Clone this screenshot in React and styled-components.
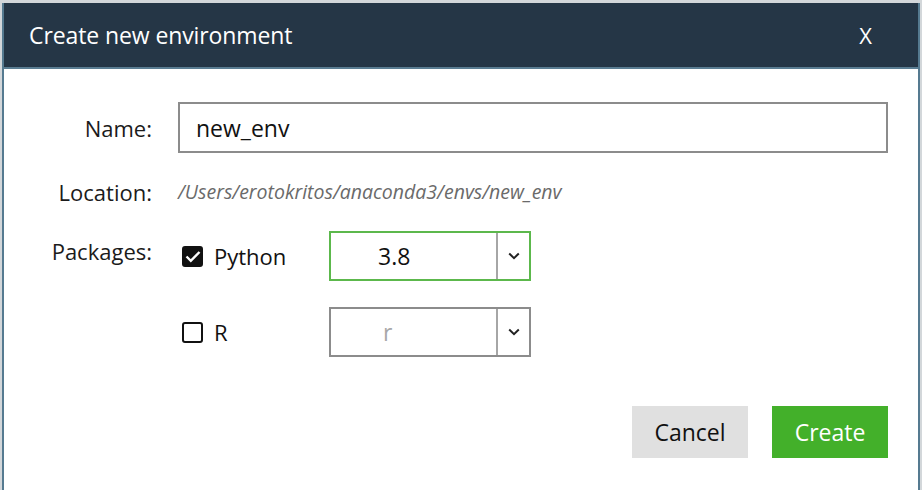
import React, { useState } from "react";
import styled, { createGlobalStyle } from "styled-components";

const GlobalStyle = createGlobalStyle`
  html, body {
    margin: 0;
    padding: 0;
    background: #d3d7da;
    font-family: "Open Sans", "Noto Sans", sans-serif;
  }
`;

const Page = styled.div`
  width: 922px;
  height: 490px;
  padding-top: 3px;
  box-sizing: border-box;
  overflow: hidden;
`;

const Dialog = styled.div`
  margin-left: 2px;
  width: 918px;
  height: 487px;
  box-sizing: border-box;
  background: #fff;
  border-left: 2px solid #557a90;
  border-right: 2px solid #557a90;
  display: flex;
  flex-direction: column;
`;

const Header = styled.div`
  height: 64px;
  background: #253646;
  border-bottom: 2px solid #5a7d92;
  display: flex;
  align-items: center;
  justify-content: space-between;
  padding: 0 46px 0 25px;
  color: #fff;
`;

const Title = styled.div`
  font-size: 23px;
  letter-spacing: -0.1px;
`;

const Close = styled.button`
  background: none;
  border: none;
  color: #fff;
  font-family: inherit;
  font-size: 22px;
  padding: 0;
  cursor: pointer;
`;

const Body = styled.div`
  padding: 33px 30px 0 0;
  display: grid;
  grid-template-columns: 148px 1fr;
  column-gap: 26px;
  row-gap: 27px;
  align-items: center;
`;

const Label = styled.div`
  text-align: right;
  font-size: 22px;
  color: #1b1b1b;
  align-self: ${(p) => (p.$top ? "start" : "center")};
  padding-top: ${(p) => (p.$top ? "8px" : "0")};
  line-height: 24px;
`;

const TextInput = styled.input`
  height: 51px;
  box-sizing: border-box;
  border: 2px solid #8c8c8c;
  padding: 0 16px;
  font-family: inherit;
  font-size: 23px;
  color: #111;
  outline: none;
`;

const Path = styled.div`
  font-size: 19.5px;
  font-style: italic;
  color: #6a6a6a;
  line-height: 24px;
  white-space: nowrap;
`;

const Packages = styled.div`
  display: flex;
  flex-direction: column;
  gap: 26px;
`;

const PackageRow = styled.div`
  display: flex;
  align-items: center;
`;

const CheckLabel = styled.label`
  width: 151px;
  display: flex;
  align-items: center;
  gap: 11px;
  padding-left: 4px;
  box-sizing: border-box;
  font-size: 22px;
  color: #111;
  cursor: pointer;
`;

const Box = styled.span`
  width: 21px;
  height: 21px;
  box-sizing: border-box;
  border-radius: 3px;
  border: 2px solid #111;
  background: ${(p) => (p.$checked ? "#111" : "#fff")};
  display: flex;
  align-items: center;
  justify-content: center;
`;

const Select = styled.div`
  width: 202px;
  height: 50px;
  box-sizing: border-box;
  border: 2px solid ${(p) => (p.$active ? "#5cb84c" : "#8c8c8c")};
  display: flex;
`;

const SelectValue = styled.div`
  flex: 1;
  display: flex;
  align-items: center;
  padding-left: ${(p) => (p.$muted ? "52px" : "47px")};
  font-size: 23px;
  color: ${(p) => (p.$muted ? "#a8a8a8" : "#111")};
  border-right: 2px solid #a6a6a6;
`;

const Arrow = styled.div`
  width: 31px;
  display: flex;
  align-items: center;
  justify-content: center;
`;

const Footer = styled.div`
  display: flex;
  justify-content: flex-end;
  gap: 24px;
  padding: 49px 30px 0 0;
`;

const Button = styled.button`
  width: 116px;
  height: 52px;
  border: none;
  font-family: inherit;
  font-size: 23px;
  background: ${(p) => (p.$primary ? "#43b02a" : "#e0e0e0")};
  color: ${(p) => (p.$primary ? "#fff" : "#111")};
  cursor: pointer;
`;

const Chevron = () => (
  <svg width="12" height="8" viewBox="0 0 12 8">
    <path d="M1.2 1.5l4.8 4.6 4.8-4.6" fill="none" stroke="#222" strokeWidth="2" />
  </svg>
);

const Check = () => (
  <svg width="16" height="13" viewBox="0 0 16 13">
    <path d="M1.5 6.5l4.3 4.3L14.5 2" fill="none" stroke="#fff" strokeWidth="2.4" />
  </svg>
);

function Package({ name, version, checked, onToggle }) {
  return (
    <PackageRow>
      <CheckLabel onClick={onToggle}>
        <Box $checked={checked}>{checked && <Check />}</Box>
        {name}
      </CheckLabel>
      <Select $active={checked}>
        <SelectValue $muted={!checked}>{version}</SelectValue>
        <Arrow>
          <Chevron />
        </Arrow>
      </Select>
    </PackageRow>
  );
}

export default function App() {
  const [name, setName] = useState("new_env");
  const [py, setPy] = useState(true);
  const [r, setR] = useState(false);

  return (
    <>
      <GlobalStyle />
      <Page>
        <Dialog>
          <Header>
            <Title>Create new environment</Title>
            <Close>X</Close>
          </Header>
          <Body>
            <Label>Name:</Label>
            <TextInput value={name} onChange={(e) => setName(e.target.value)} />
            <Label>Location:</Label>
            <Path>/Users/erotokritos/anaconda3/envs/{name}</Path>
            <Label $top>Packages:</Label>
            <Packages>
              <Package name="Python" version="3.8" checked={py} onToggle={() => setPy(!py)} />
              <Package name="R" version="r" checked={r} onToggle={() => setR(!r)} />
            </Packages>
          </Body>
          <Footer>
            <Button>Cancel</Button>
            <Button $primary>Create</Button>
          </Footer>
        </Dialog>
      </Page>
    </>
  );
}
